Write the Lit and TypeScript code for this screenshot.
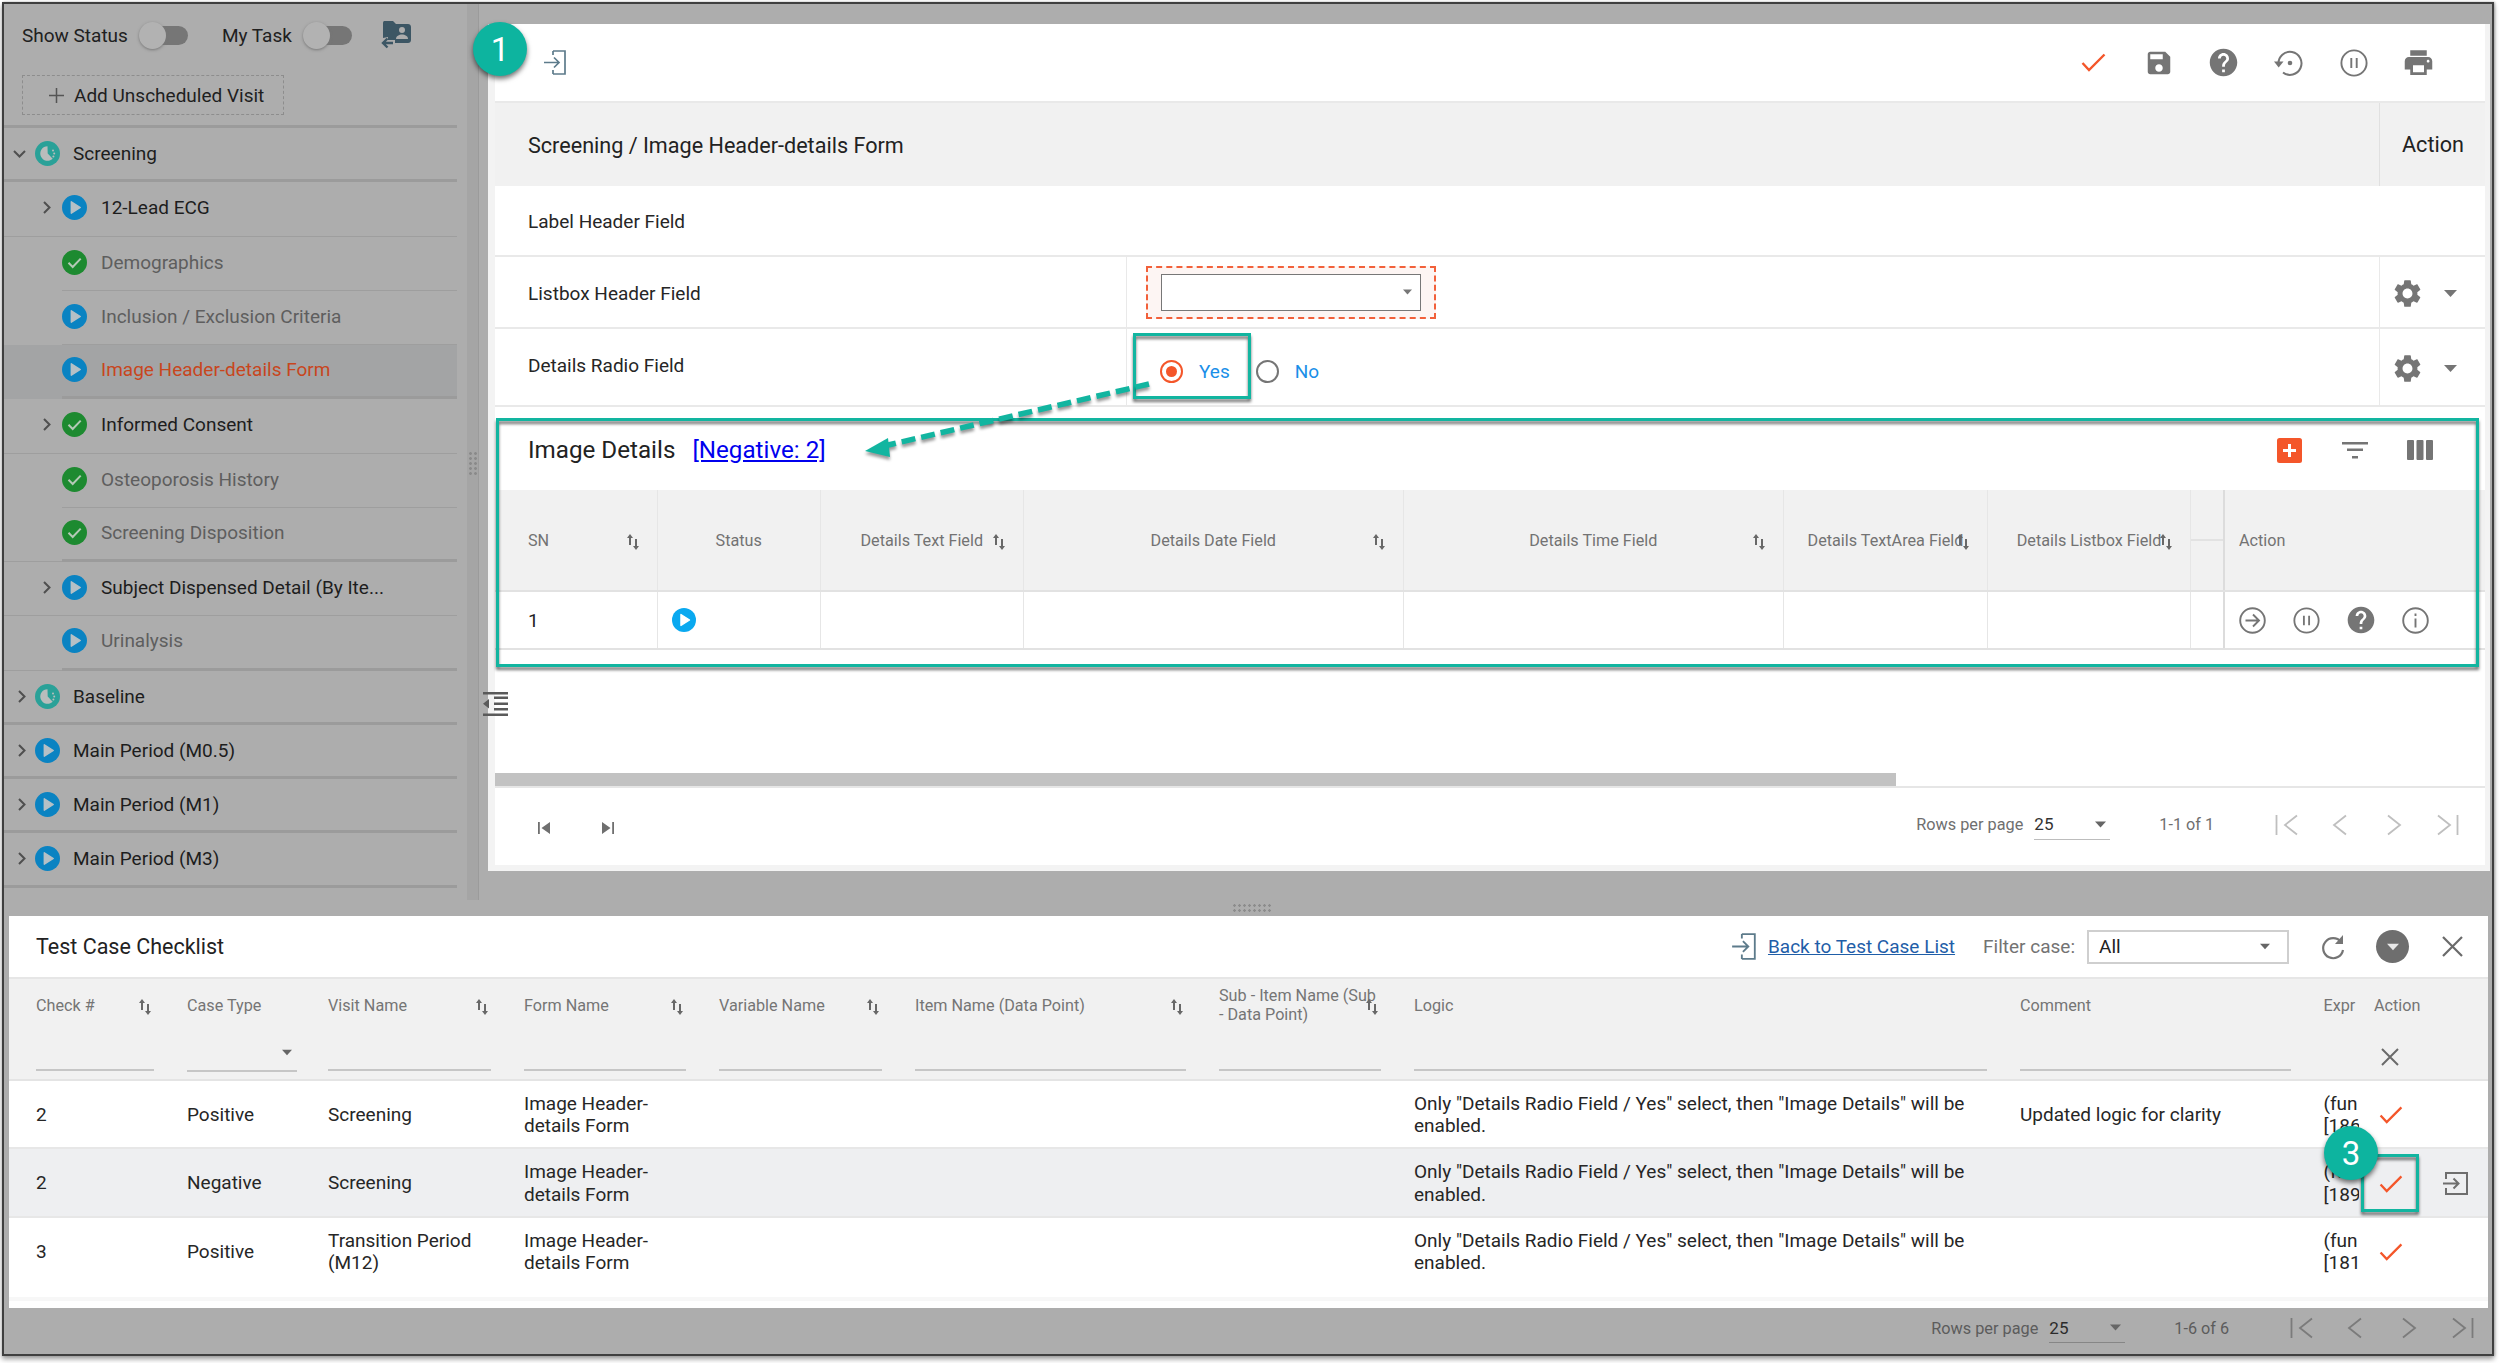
import { LitElement, html, css } from 'lit'
import { customElement } from 'lit/decorators.js'

const P = {
  save: 'M17 3H5c-1.11 0-2 .9-2 2v14c0 1.1.89 2 2 2h14c1.1 0 2-.9 2-2V7l-4-4zm-5 16c-1.66 0-3-1.34-3-3s1.34-3 3-3 3 1.34 3 3-1.34 3-3 3zm3-10H5V5h10v4z',
  help: 'M12 2C6.48 2 2 6.48 2 12s4.48 10 10 10 10-4.48 10-10S17.52 2 12 2zm1 17h-2v-2h2v2zm2.07-7.75l-.9.92C13.45 12.9 13 13.5 13 15h-2v-.5c0-1.1.45-2.1 1.17-2.83l1.24-1.26c.37-.36.59-.86.59-1.41 0-1.1-.9-2-2-2s-2 .9-2 2H8c0-2.21 1.79-4 4-4s4 1.79 4 4c0 .88-.36 1.68-.93 2.25z',
  print: 'M19 8H5c-1.66 0-3 1.34-3 3v6h4v4h12v-4h4v-6c0-1.66-1.34-3-3-3zm-3 11H8v-5h8v5zm3-7c-.55 0-1-.45-1-1s.45-1 1-1 1 .45 1 1-.45 1-1 1zm-1-9H6v4h12V3z',
  gear: 'M19.14 12.94c.04-.3.06-.61.06-.94 0-.32-.02-.64-.07-.94l2.03-1.58c.18-.14.23-.41.12-.61l-1.92-3.32c-.12-.22-.37-.29-.59-.22l-2.39.96c-.5-.38-1.03-.7-1.62-.94l-.36-2.54c-.04-.24-.24-.41-.48-.41h-3.84c-.24 0-.43.17-.47.41l-.36 2.54c-.59.24-1.13.57-1.62.94l-2.39-.96c-.22-.08-.47 0-.59.22L2.74 8.87c-.12.21-.08.47.12.61l2.03 1.58c-.05.3-.09.63-.09.94s.02.64.07.94l-2.03 1.58c-.18.14-.23.41-.12.61l1.92 3.32c.12.22.37.29.59.22l2.39-.96c.5.38 1.03.7 1.62.94l.36 2.54c.05.24.24.41.48.41h3.84c.24 0 .44-.17.47-.41l.36-2.54c.59-.24 1.13-.56 1.62-.94l2.39.96c.22.08.47 0 .59-.22l1.92-3.32c.12-.22.07-.47-.12-.61l-2.01-1.58zM12 15.6c-1.98 0-3.6-1.62-3.6-3.6s1.62-3.6 3.6-3.6 3.6 1.62 3.6 3.6-1.62 3.6-3.6 3.6z',
  sort: 'M4 1L7 5H5V12H3V5H1ZM10 17L13 13H11V6H9V13H7Z',
}

const fill = (d: string, size: number, color = '#757575') => html`<svg class="ic" width=${size} height=${size} viewBox="0 0 24 24" fill=${color}><path d=${d}></path></svg>`
const sort = () => html`<svg class="sort" width="14" height="18" viewBox="0 0 14 18" fill="#686868"><path d=${P.sort}></path></svg>`
const check = (w = 25, h = 19) => html`<svg class="ic" width=${w} height=${h} viewBox="0 0 25 19" fill="none" stroke="#f4562a" stroke-width="2.4"><path d="M1.5 10l6.5 7L23.5 1.5"></path></svg>`
const caret = (w = 13, h = 7, color = '#757575') => html`<svg class="ic" width=${w} height=${h} viewBox="0 0 13 7" fill=${color}><path d="M0 0h13L6.5 7z"></path></svg>`
const doorIn = (w = 22, h = 25, color = '#5d7b8b') => html`<svg class="ic" width=${w} height=${h} viewBox="0 0 22 25" fill="none" stroke=${color} stroke-width="1.7"><path d="M9 1h12v23H9M9 1v4M9 24v-4M0 12.5h15M10 7.5l5 5-5 5"></path></svg>`
const pauseRing = (size: number) => html`<svg class="ic" width=${size} height=${size} viewBox="0 0 28 28" fill="none" stroke="#757575" stroke-width="1.9"><circle cx="14" cy="14" r="12.6"></circle><path d="M11.3 9v10M16.7 9v10"></path></svg>`

type Sep = 'thick' | 'thin' | 'inset' | 'insetThick' | 'mixThick'
interface NavItem { label: string; level: number; icon: 'visit' | 'play' | 'done'; chevron?: 'down' | 'right'; leaf?: boolean; active?: boolean; sep: Sep }

const NAV: NavItem[] = [
  { label: 'Screening', level: 0, icon: 'visit', chevron: 'down', sep: 'thick' },
  { label: '12-Lead ECG', level: 1, icon: 'play', chevron: 'right', sep: 'thin' },
  { label: 'Demographics', level: 1, icon: 'done', leaf: true, sep: 'inset' },
  { label: 'Inclusion / Exclusion Criteria', level: 1, icon: 'play', leaf: true, sep: 'inset' },
  { label: 'Image Header-details Form', level: 1, icon: 'play', active: true, sep: 'insetThick' },
  { label: 'Informed Consent', level: 1, icon: 'done', chevron: 'right', sep: 'thin' },
  { label: 'Osteoporosis History', level: 1, icon: 'done', leaf: true, sep: 'inset' },
  { label: 'Screening Disposition', level: 1, icon: 'done', leaf: true, sep: 'mixThick' },
  { label: 'Subject Dispensed Detail (By Ite...', level: 1, icon: 'play', chevron: 'right', sep: 'thin' },
  { label: 'Urinalysis', level: 1, icon: 'play', leaf: true, sep: 'mixThick' },
  { label: 'Baseline', level: 0, icon: 'visit', chevron: 'right', sep: 'thick' },
  { label: 'Main Period (M0.5)', level: 0, icon: 'play', chevron: 'right', sep: 'thick' },
  { label: 'Main Period (M1)', level: 0, icon: 'play', chevron: 'right', sep: 'thick' },
  { label: 'Main Period (M3)', level: 0, icon: 'play', chevron: 'right', sep: 'thick' },
]

const statusIcon = (kind: NavItem['icon']) => {
  if (kind === 'visit') {
    return html`<svg class="ic" width="25" height="25" viewBox="0 0 25 25"><circle cx="12.5" cy="12.5" r="12.5" fill="#2aa198"></circle><path d="M12.5 5.2a7.3 7.3 0 1 0 5.2 12.5l-5-5.2z" fill="#b9bdbc"></path><circle cx="18" cy="9.5" r="1" fill="#b9bdbc"></circle><circle cx="19.2" cy="12.5" r="1" fill="#b9bdbc"></circle><circle cx="18.4" cy="15.4" r="1" fill="#b9bdbc"></circle></svg>`
  }
  if (kind === 'done') {
    return html`<svg class="ic" width="25" height="25" viewBox="0 0 25 25"><circle cx="12.5" cy="12.5" r="12.5" fill="#1d8a30"></circle><path d="M6.5 12.8l4.2 4.2 8-8.4" fill="none" stroke="#b4c9b6" stroke-width="2"></path></svg>`
  }
  return html`<svg class="ic" width="25" height="25" viewBox="0 0 25 25"><circle cx="12.5" cy="12.5" r="12.5" fill="#0a83c2"></circle><path d="M9.3 6.8l9 5.7-9 5.7z" fill="#b5c0c6" stroke="#b5c0c6" stroke-width="1.4" stroke-linejoin="round"></path></svg>`
}

const CHECKS = [
  { no: '2', type: 'Positive', visit: 'Screening', expr: '[186', comment: 'Updated logic for clarity' },
  { no: '2', type: 'Negative', visit: 'Screening', expr: '[189', comment: '', hot: true },
  { no: '3', type: 'Positive', visit: 'Transition Period (M12)', expr: '[181', comment: '' },
]

const LOGIC = 'Only "Details Radio Field / Yes" select, then "Image Details" will be enabled.'

const DETAIL_COLS = [
  { label: 'SN', cls: 'left', sort: true },
  { label: 'Status', cls: '', sort: false },
  { label: 'Details Text Field', cls: '', sort: true },
  { label: 'Details Date Field', cls: '', sort: true },
  { label: 'Details Time Field', cls: '', sort: true },
  { label: 'Details TextArea Field', cls: '', sort: true },
  { label: 'Details Listbox Field', cls: '', sort: true },
]

const CHECK_COLS = [
  { label: 'Check #', sort: true, filter: true },
  { label: 'Case Type', sort: false, filter: true, select: true },
  { label: 'Visit Name', sort: true, filter: true },
  { label: 'Form Name', sort: true, filter: true },
  { label: 'Variable Name', sort: true, filter: true },
  { label: 'Item Name (Data Point)', sort: true, filter: true },
  { label: 'Sub - Item Name (Sub - Data Point)', sort: true, filter: true },
  { label: 'Logic', sort: false, filter: true },
  { label: 'Comment', sort: false, filter: true },
  { label: 'Expr', sort: false, filter: false },
]

@customElement('app-root')
export class AppRoot extends LitElement {
  static styles = css`
    :host {
      display: block;
      width: 2500px;
      height: 1363px;
      background: #fff;
      font-family: Roboto, "Liberation Sans", sans-serif;
      color: #1f1f1f;
    }

    .page { position: relative; width: 2500px; height: 1363px; overflow: hidden; }
    .ic { display: block; flex: none; }

    .frame {
      box-sizing: border-box;
      width: 2492px;
      height: 1354px;
      margin: 2px 0 0 2px;
      border: 2px solid #3f3f3f;
      background: #adadad;
      box-shadow: 0 3px 5px #9a9a9a, 1px 0 2px #bbb;
      display: flex;
      flex-direction: column;
    }

    /* upper area */
    .upper { display: flex; height: 896px; }

    .sidebar { width: 463px; flex: none; font-size: 19px; }
    .switches { display: flex; align-items: center; height: 62px; padding: 0 0 0 18px; }
    .switch-label { color: #202020; }
    .switch {
      width: 44px; height: 19px; border-radius: 10px; background: #767676;
      margin-left: 16px; position: relative; flex: none;
    }
    .switch::before {
      content: ''; position: absolute; left: -5px; top: -4px; width: 27px; height: 27px;
      border-radius: 50%; background: #b2b2b2; box-shadow: 0 1px 3px #777;
    }
    .switch.first { margin-right: 34px; }
    .folder { margin-left: 29px; }

    .add-visit {
      box-sizing: border-box; width: 262px; height: 40px; margin: 9px 0 10px 18px;
      border: 1px dashed #8d8d8d; display: flex; align-items: center; padding-left: 26px; gap: 10px;
    }

    .list { margin: 0 10px 0 0; border-top: 3px solid #9b9b9b; }
    .row { display: grid; height: 54.25px; box-sizing: border-box; }
    .row.l0 { grid-template-columns: 27px 1fr; }
    .row.l1 { grid-template-columns: 58px 1fr; }
    .row.l1 .body > *, .row.l1 .gut > * { margin-top: -2px; }
    .row.active { background: #a3a4a5; }
    .gut { display: flex; align-items: center; justify-content: flex-end; padding-right: 11px; box-sizing: border-box; }
    .l0 .gut { padding-right: 5px; }
    .l0 .body { padding-left: 4px; gap: 13px; }
    .body { display: flex; align-items: center; gap: 14px; min-width: 0; }
    .row .label { color: #1d1d1d; }
    .row.leaf .label { color: #5e5e5e; }
    .row.active .label { color: #c8461d; }
    .row.thick { border-bottom: 3px solid #9b9b9b; }
    .row.thin { border-bottom: 1.5px solid #9e9e9e; }
    .row.inset .body { border-bottom: 1.5px solid #9e9e9e; }
    .row.insetThick .body { border-bottom: 3px solid #9b9b9b; }
    .row.mixThick .body { border-bottom: 3px solid #9b9b9b; }
    .row.mixThick .gut { border-bottom: 1.5px solid #9e9e9e; }

    .strip {
      width: 12px; flex: none; background: #a5a5a5; border-right: 1px solid #9b9b9b;
      box-sizing: border-box; display: flex; align-items: center; justify-content: center;
    }
    .grip {
      width: 10px; height: 24px; margin-top: 22px;
      background-image: radial-gradient(#8a8a8a 1.2px, transparent 1.6px);
      background-size: 5px 5px;
    }

    .main-wrap {
      margin: 20px 0 0 9px; width: 2002px; height: 847px; box-sizing: border-box;
      padding: 0 5px 6px 7px; background: #f3f3f3;
    }
    .main { height: 100%; background: #fff; display: flex; flex-direction: column; }

    .toolbar {
      height: 79px; flex: none; box-sizing: border-box; border-bottom: 2px solid #e9e9e9;
      display: flex; align-items: center; padding: 0 34px 0 49px;
    }
    .tools { display: flex; align-items: center; margin-left: auto; }
    .tool { width: 65px; display: flex; justify-content: center; align-items: center; }

    .form-title {
      height: 83px; flex: none; background: #f1f1f1; display: flex; align-items: center;
      font-size: 21.6px; color: #222; box-sizing: border-box; padding-top: 2px;
    }
    .form-title .name { flex: 1; padding-left: 33px; }
    .form-title .action-cell { padding-left: 22px; margin-top: -2px; }
    .action-cell {
      width: 106px; flex: none; box-sizing: border-box; border-left: 1.5px solid #e0e0e0;
      align-self: stretch; display: flex; align-items: center; padding-left: 24px;
    }

    .field { display: flex; font-size: 19px; color: #262626; flex: none; box-sizing: border-box; border-bottom: 2px solid #e9e9e9; }
    .field .name { width: 631px; flex: none; box-sizing: border-box; padding: 2px 0 0 33px; display: flex; align-items: center; }
    .field .value { flex: 1; display: flex; align-items: center; border-left: 1.5px solid #e9e9e9; }
    .field .action-cell { padding: 2px 0 0 11px; gap: 20px; border-left-color: #e9e9e9; }
    .h71 { height: 71px; }
    .h72 { height: 72px; }
    .h78 { height: 78px; }
    .field .name.lift { padding-bottom: 6px; }

    .dashed {
      box-sizing: border-box; width: 290px; height: 53px; margin-left: 19px;
      border: 2px dashed #f2603a; background: #fdf5f3; display: flex; align-items: center; justify-content: center;
    }
    .select-box {
      box-sizing: border-box; width: 260px; height: 37px; background: #fff; border: 1.5px solid #777;
      display: flex; align-items: center; justify-content: flex-end; padding-right: 8px;
    }

    .radios { display: flex; align-items: center; padding: 8px 0 0 33px; }
    .radio { width: 19px; height: 19px; border-radius: 50%; border: 2px solid #757575; flex: none; display: flex; align-items: center; justify-content: center; }
    .radio.on { border-color: #f4562a; }
    .radio.on::after { content: ''; width: 11px; height: 11px; border-radius: 50%; background: #f4562a; }
    .radio-text { color: #1a8fe8; font-size: 19px; margin-left: 16px; }
    .radio-text.yes { margin-right: 26px; }

    .details-head { height: 83px; flex: none; display: flex; align-items: center; padding: 3px 0 0 33px; box-sizing: border-box; }
    .details-title { font-size: 24.2px; color: #222; }
    .details-link { font-size: 24.2px; color: #0000ee; text-decoration: underline; margin-left: 17px; }
    .details-tools { display: flex; margin-left: auto; margin-right: 33px; align-items: center; }
    .details-tool { width: 65px; display: flex; justify-content: center; }

    .dgrid { display: grid; grid-template-columns: 163px 162.5px 203.5px 379.5px 380.5px 204px 203px 34px 1fr; flex: none; box-sizing: border-box; }
    .dgrid > div { box-sizing: border-box; border-right: 1.5px solid #e6e6e6; }
    .dhead { height: 102px; background: #f1f1f1; border-bottom: 2px solid #e2e2e2; font-size: 16.2px; color: #737373; }
    .dh { display: grid; align-items: center; justify-items: center; }
    .dh > * { grid-area: 1 / 1; }
    .dh .sort { justify-self: end; margin-right: 17px; margin-top: 4px; }
    .dh.left { justify-items: start; padding-left: 33px; }
    .dh.left .sort { justify-self: end; }
    .dh.rule { display: flex; align-items: center; }
    .dh.rule::after { content: ''; width: 100%; height: 2px; background: #e2e2e2; }
    .dgrid > .act { border-right: 0; border-left: 2px solid #dcdcdc; margin-left: -2px; display: flex; align-items: center; padding-left: 14px; }
    .drow { height: 58px; border-bottom: 2px solid #e2e2e2; font-size: 19px; }
    .dcell { display: flex; align-items: center; padding-left: 33px; }
    .dcell.tight { padding-left: 14px; }
    .drow .act { gap: 27.400px; }
    .help-slot { width: 27px; display: flex; justify-content: center; flex: none; }

    .fill { flex: 1; }
    .hscroll { height: 13px; flex: none; width: 1401px; background: #c2c2c2; }
    .hline { height: 2px; flex: none; background: #e6e6e6; }

    .pager-bar { display: flex; align-items: center; font-size: 16.3px; color: #6f6f6f; }
    .pager-left { display: flex; gap: 50px; padding: 3px 0 0 42px; }
    .pager-right { margin-left: auto; display: flex; align-items: center; }
    .per-page { margin-right: 11px; }
    .page-select {
      width: 76px; height: 30px; box-sizing: border-box; border-bottom: 1.5px solid #bdbdbd; color: #333;
      display: flex; align-items: center; justify-content: space-between; padding: 0 4px 0 0; font-size: 17px; margin-right: 49px;
    }
    .range { margin-right: 45px; font-size: 16.2px; }
    .page-btn { width: 54px; display: flex; justify-content: center; }
    .main .pager-bar { flex: none; height: 77px; padding-right: 10px; }
    .main .pager-bar .pager-right { margin-top: -4px; }
    .main .pager-bar .page-btn svg { stroke: #bfbfbf; }
    .foot { flex: 1; display: flex; padding-bottom: 6px; box-sizing: border-box; }
    .foot .pager-bar { flex: 1; padding-right: 2px; color: #5c5c5c; }
    .foot .page-btn svg { stroke: #7b7b7b; }
    .foot .page-select { border-bottom-color: #868686; color: #2b2b2b; }

    .band { height: 16px; flex: none; display: flex; align-items: center; justify-content: center; padding-left: 9px; }
    .dots {
      width: 41px; height: 10px;
      background-image: radial-gradient(#8c8c8c 1.1px, transparent 1.5px);
      background-size: 5px 5px;
    }

    /* checklist */
    .checklist { height: 392px; flex: none; margin: 0 4px 0 5px; background: #fff; display: flex; flex-direction: column; }
    .cl-bar {
      height: 63px; flex: none; box-sizing: border-box; border-bottom: 2px solid #e6e6e6;
      display: flex; align-items: center; padding: 0 25px 0 27px;
    }
    .cl-title { font-size: 21.5px; color: #222; }
    .cl-right { margin-left: auto; display: flex; align-items: center; }
    .back-link { color: #1f5ea8; text-decoration: underline; font-size: 19px; margin-left: 12px; }
    .filter-label { color: #737373; font-size: 19px; margin: 0 12px 0 28px; }
    .filter-select {
      box-sizing: border-box; width: 202px; height: 34px; border: 2px solid #cfcfcf; display: flex; align-items: center;
      justify-content: space-between; padding: 0 17px 0 10px; font-size: 19px; color: #222;
    }
    .refresh { margin-left: 31px; }
    .round { margin-left: 30px; width: 33px; height: 33px; border-radius: 50%; background: #6e6e6e; display: flex; align-items: center; justify-content: center; }
    .close { margin-left: 33px; }

    .cgrid {
      display: grid; flex: none; padding-left: 27px;
      grid-template-columns: 151px 141px 196px 195px 196px 304px 195px 606px 303.5px 50.5px 1fr;
    }
    .chead { height: 102px; background: #f1f1f1; border-bottom: 2px solid #e4e4e4; box-sizing: border-box; font-size: 16.2px; color: #757575; }
    .ch { display: grid; grid-template-rows: 52px 1fr; padding-right: 33px; min-width: 0; }
    .ch-top { display: grid; align-items: center; line-height: 19px; }
    .ch-top > * { grid-area: 1 / 1; }
    .ch-top .sort { justify-self: end; margin-right: 2px; margin-top: 4px; }
    .ch-filter { box-sizing: border-box; height: 40px; border-bottom: 2.5px solid #c6c6c6; display: flex; align-items: center; justify-content: flex-end; padding: 4px 5px 0 0; }
    .ch.select .ch-filter { height: 41px; margin-right: -2px; }
    .ch.bare { padding-right: 0; overflow: hidden; width: 35px; }
    .ch.bare .ch-filter { display: none; }
    .ch-x { height: 40px; display: flex; align-items: center; margin-left: 7px; padding-top: 12px; box-sizing: border-box; }

    .crow { height: 68px; box-sizing: border-box; padding-top: 2px; border-bottom: 2px solid #e7e7e7; font-size: 19px; color: #262626; line-height: 22.5px; align-items: center; }
    .crow.last { border-bottom: 0; padding-top: 0; }
    .crow.hot { background: #eeeff1; height: 69px; }
    .cc { padding-right: 33px; min-width: 0; }
    .cc.expr { padding: 0; width: 35px; overflow: hidden; white-space: nowrap; }
    .cc.act { padding: 0 0 0 4.5px; display: flex; align-items: center; gap: 40px; }
    .cl-end { margin-top: 11px; height: 4px; flex: none; background: #f7f7f7; }

    /* annotations */
    .mark { position: absolute; box-sizing: border-box; border: 3px solid #12b5a0; filter: drop-shadow(0 3px 1.5px rgba(0,0,0,.55)); }
    .mark-yes { left: 1133px; top: 333px; width: 118px; height: 66px; }
    .mark-grid { left: 496px; top: 418px; width: 1983px; height: 249px; }
    .mark-check { left: 2361px; top: 1154px; width: 58px; height: 58px; }

    .badge {
      position: absolute; width: 54px; height: 54px; border-radius: 50%; background: #0db49f; color: #fff;
      font-size: 33px; display: flex; align-items: center; justify-content: center;
      box-shadow: 0 3px 5px rgba(0,0,0,.55);
    }
    .badge-1 { left: 473px; top: 22px; }
    .badge-3 { left: 2324px; top: 1126px; }

    .arrow { position: absolute; left: 0; top: 0; filter: drop-shadow(0 3px 1.5px rgba(0,0,0,.4)); }
    .collapse { position: absolute; left: 483px; top: 692px; }
  `

  private pager(range: string, withLeft: boolean) {
    const c = (d: string) => html`<div class="page-btn"><svg class="ic" width="24" height="22" viewBox="0 0 24 22" fill="none" stroke-width="1.8"><path d=${d}></path></svg></div>`
    return html`
      <div class="pager-bar">
        ${withLeft ? html`
          <div class="pager-left">
            <svg class="ic" width="14" height="14" viewBox="0 0 14 14" fill="#6f6f6f"><path d="M1 1h1.800v12H1zM13 1v12L4.500 7z"></path></svg>
            <svg class="ic" width="14" height="14" viewBox="0 0 14 14" fill="#6f6f6f"><path d="M11.200 1H13v12h-1.800zM1 1v12l8.500-6z"></path></svg>
          </div>` : ''}
        <div class="pager-right">
          <span class="per-page">Rows per page</span>
          <div class="page-select"><span>25</span>${caret(11, 7, '#666')}</div>
          <span class="range">${range}</span>
          ${c('M2.500 1v20M23 1.500L11 11l12 9.500')}
          ${c('M18 1.500L6 11l12 9.500')}
          ${c('M6 1.500L18 11 6 20.500')}
          ${c('M2 1.500L14 11 2 20.500M21.500 1v20')}
        </div>
      </div>
    `
  }

  private navRow(n: NavItem) {
    const chev = n.chevron === 'down'
      ? html`<svg class="ic" width="13" height="8" viewBox="0 0 13 8" fill="none" stroke="#4f4f4f" stroke-width="2"><path d="M1 1l5.500 5.500L12 1"></path></svg>`
      : n.chevron === 'right'
        ? html`<svg class="ic" width="8" height="13" viewBox="0 0 8 13" fill="none" stroke="#4f4f4f" stroke-width="2"><path d="M1 1l5.500 5.500L1 12"></path></svg>`
        : ''
    return html`
      <div class="row l${n.level} ${n.sep} ${n.leaf ? 'leaf' : ''} ${n.active ? 'active' : ''}">
        <div class="gut">${chev}</div>
        <div class="body">${statusIcon(n.icon)}<span class="label">${n.label}</span></div>
      </div>
    `
  }

  private sidebar() {
    return html`
      <div class="sidebar">
        <div class="switches">
          <span class="switch-label">Show Status</span>
          <div class="switch first"></div>
          <span class="switch-label">My Task</span>
          <div class="switch"></div>
          <svg class="ic folder" width="30" height="28" viewBox="0 0 30 28" fill="#3c5664">
            <path d="M3 0h9l3 3h12c1.700 0 3 1.300 3 3v13c0 1.700-1.300 3-3 3H14v-3H7v-3l-5 1V2c0-1.100.9-2 1-2z"></path>
            <circle cx="21" cy="9" r="3" fill="#adadad"></circle>
            <path d="M15 18c0-3 3-4.500 6-4.500s6 1.500 6 4.500z" fill="#adadad"></path>
            <path d="M12 22H3M6.500 17.500L2 22l4.500 4.500" fill="none" stroke="#3c5664" stroke-width="2.400"></path>
          </svg>
        </div>
        <div class="add-visit">
          <svg class="ic" width="15" height="15" viewBox="0 0 15 15" stroke="#555" stroke-width="1.500"><path d="M7.500 0v15M0 7.500h15"></path></svg>
          <span>Add Unscheduled Visit</span>
        </div>
        <div class="list">${NAV.map(n => this.navRow(n))}</div>
      </div>
    `
  }

  private formPanel() {
    return html`
      <div class="main-wrap">
        <div class="main">
          <div class="toolbar">
            ${doorIn()}
            <div class="tools">
              <div class="tool">${check()}</div>
              <div class="tool">${fill(P.save, 30)}</div>
              <div class="tool">${fill(P.help, 33)}</div>
              <div class="tool">
                <svg class="ic" width="30" height="28" viewBox="0 0 30 28" fill="none" stroke="#757575" stroke-width="2">
                  <path d="M4.500 15A11.500 11.500 0 1 1 9 23.500"></path>
                  <path d="M0 12.500h9.500L4.700 18.500z" fill="#757575" stroke="none"></path>
                  <circle cx="16" cy="14" r="2.300" fill="#757575" stroke="none"></circle>
                </svg>
              </div>
              <div class="tool">${pauseRing(28)}</div>
              <div class="tool">${fill(P.print, 33)}</div>
            </div>
          </div>
          <div class="form-title">
            <div class="name">Screening / Image Header-details Form</div>
            <div class="action-cell">Action</div>
          </div>
          <div class="field h71"><div class="name">Label Header Field</div></div>
          <div class="field h72">
            <div class="name">Listbox Header Field</div>
            <div class="value">
              <div class="dashed"><div class="select-box">${caret(9, 6, '#777')}</div></div>
            </div>
            <div class="action-cell">${fill(P.gear, 33)}${caret()}</div>
          </div>
          <div class="field h78">
            <div class="name lift">Details Radio Field</div>
            <div class="value">
              <div class="radios">
                <div class="radio on"></div><span class="radio-text yes">Yes</span>
                <div class="radio"></div><span class="radio-text">No</span>
              </div>
            </div>
            <div class="action-cell">${fill(P.gear, 33)}${caret()}</div>
          </div>

          <div class="details-head">
            <span class="details-title">Image Details</span>
            <span class="details-link">[Negative: 2]</span>
            <div class="details-tools">
              <div class="details-tool">
                <svg class="ic" width="25" height="25" viewBox="0 0 25 25"><rect width="25" height="25" rx="2.500" fill="#f4562a"></rect><path d="M12.500 6v13M6 12.500h13" stroke="#fff" stroke-width="3"></path></svg>
              </div>
              <div class="details-tool">
                <svg class="ic" width="26" height="17" viewBox="0 0 26 17" fill="#757575"><path d="M0 0h26v2.500H0zM5 6.500h16V9H5zM10 14h6v2.500h-6z"></path></svg>
              </div>
              <div class="details-tool">
                <svg class="ic" width="26" height="20" viewBox="0 0 26 20" fill="#757575"><rect width="7" height="20" rx="1"></rect><rect x="9.500" width="7" height="20" rx="1"></rect><rect x="19" width="7" height="20" rx="1"></rect></svg>
              </div>
            </div>
          </div>

          <div class="dgrid dhead">
            ${DETAIL_COLS.map(c => html`<div class="dh ${c.cls}"><span>${c.label}</span>${c.sort ? sort() : ''}</div>`)}
            <div class="dh rule"></div>
            <div class="act">Action</div>
          </div>
          <div class="dgrid drow">
            <div class="dcell">1</div>
            <div class="dcell tight">
              <svg class="ic" width="24" height="24" viewBox="0 0 25 25"><circle cx="12.500" cy="12.500" r="12.500" fill="#0aa9f0"></circle><path d="M9.300 6.800l9 5.700-9 5.700z" fill="#fff" stroke="#fff" stroke-width="1.400" stroke-linejoin="round"></path></svg>
            </div>
            <div></div><div></div><div></div><div></div><div></div><div></div>
            <div class="act">
              <svg class="ic" width="27" height="27" viewBox="0 0 27 27" fill="none" stroke="#757575" stroke-width="1.900"><circle cx="13.500" cy="13.500" r="12.300"></circle><path d="M6.500 13.500h13M14 7.500l6 6-6 6"></path></svg>
              ${pauseRing(27)}
              <div class="help-slot">${fill(P.help, 32)}</div>
              <svg class="ic" width="27" height="27" viewBox="0 0 27 27" fill="none" stroke="#757575" stroke-width="1.900"><circle cx="13.500" cy="13.500" r="12.300"></circle><path d="M13.500 11.500v9M13.500 6.500v2.400"></path></svg>
            </div>
          </div>
          <div class="fill"></div>
          <div class="hscroll"></div>
          <div class="hline"></div>
          ${this.pager('1-1 of 1', true)}
        </div>
      </div>
    `
  }

  private checklist() {
    return html`
      <div class="checklist">
        <div class="cl-bar">
          <span class="cl-title">Test Case Checklist</span>
          <div class="cl-right">
            ${doorIn(24, 27)}
            <a class="back-link">Back to Test Case List</a>
            <span class="filter-label">Filter case:</span>
            <div class="filter-select"><span>All</span>${caret(10, 7, '#666')}</div>
            <svg class="ic refresh" width="26" height="28" viewBox="0 0 26 28" fill="none" stroke="#757575" stroke-width="2.200"><path d="M21 9A10 10 0 1 0 23 17"></path><path d="M23 2v9h-8z" fill="#757575" stroke="none"></path></svg>
            <div class="round">${caret(12, 8, '#e8e8e8')}</div>
            <svg class="ic close" width="21" height="21" viewBox="0 0 21 21" stroke="#6a6a6a" stroke-width="2.200"><path d="M1 1l19 19M20 1L1 20"></path></svg>
          </div>
        </div>
        <div class="cgrid chead">
          ${CHECK_COLS.map(c => html`
            <div class="ch ${c.select ? 'select' : ''} ${c.filter ? '' : 'bare'}">
              <div class="ch-top"><span>${c.label}</span>${c.sort ? sort() : ''}</div>
              ${c.filter ? html`<div class="ch-filter">${c.select ? caret(10, 7, '#666') : ''}</div>` : ''}
            </div>
          `)}
          <div class="ch">
            <div class="ch-top"><span>Action</span></div>
            <div class="ch-x">
              <svg class="ic" width="18" height="18" viewBox="0 0 18 18" stroke="#6a6a6a" stroke-width="2"><path d="M1 1l16 16M17 1L1 17"></path></svg>
            </div>
          </div>
        </div>
        ${CHECKS.map((r, i) => html`
          <div class="cgrid crow ${r.hot ? 'hot' : ''} ${i === 2 ? 'last' : ''}">
            <div class="cc">${r.no}</div>
            <div class="cc">${r.type}</div>
            <div class="cc">${r.visit}</div>
            <div class="cc">Image Header-details Form</div>
            <div class="cc"></div>
            <div class="cc"></div>
            <div class="cc"></div>
            <div class="cc">${LOGIC}</div>
            <div class="cc">${r.comment}</div>
            <div class="cc expr">(fun<br />${r.expr}</div>
            <div class="cc act">
              ${check(24, 18)}
              ${r.hot ? html`<svg class="ic" width="25" height="23" viewBox="0 0 25 23" fill="none" stroke="#6e6e6e" stroke-width="2"><path d="M3 7V1h21v21H3v-6M0 11.500h15M10.500 6.500l5 5-5 5"></path></svg>` : ''}
            </div>
          </div>
        `)}
        <div class="cl-end"></div>
      </div>
    `
  }

  render() {
    return html`
      <div class="page">
        <div class="frame">
          <div class="upper">
            ${this.sidebar()}
            <div class="strip"><div class="grip"></div></div>
            ${this.formPanel()}
          </div>
          <div class="band"><div class="dots"></div></div>
          ${this.checklist()}
          <div class="foot">${this.pager('1-6 of 6', false)}</div>
        </div>

        <svg class="collapse" width="25" height="24" viewBox="0 0 25 24" fill="#5a5a5a"><path d="M0 0h25v2.500H0zM11 4.500h14V7H11zM11 10.500h14V13H11zM11 16h14v2.500H11zM0 21.500h25V24H0zM0 11.800l6-4.800v9.600z"></path></svg>
        <div class="mark mark-yes"></div>
        <div class="mark mark-grid"></div>
        <div class="mark mark-check"></div>
        <svg class="arrow" width="2500" height="1363" viewBox="0 0 2500 1363" fill="none">
          <path d="M1149 384L884 446" stroke="#12b5a0" stroke-width="5.500" stroke-dasharray="14 6"></path>
          <path d="M865 451l23-13 2 19z" fill="#12b5a0"></path>
        </svg>
        <div class="badge badge-1">1</div>
        <div class="badge badge-3">3</div>
      </div>
    `
  }
}
